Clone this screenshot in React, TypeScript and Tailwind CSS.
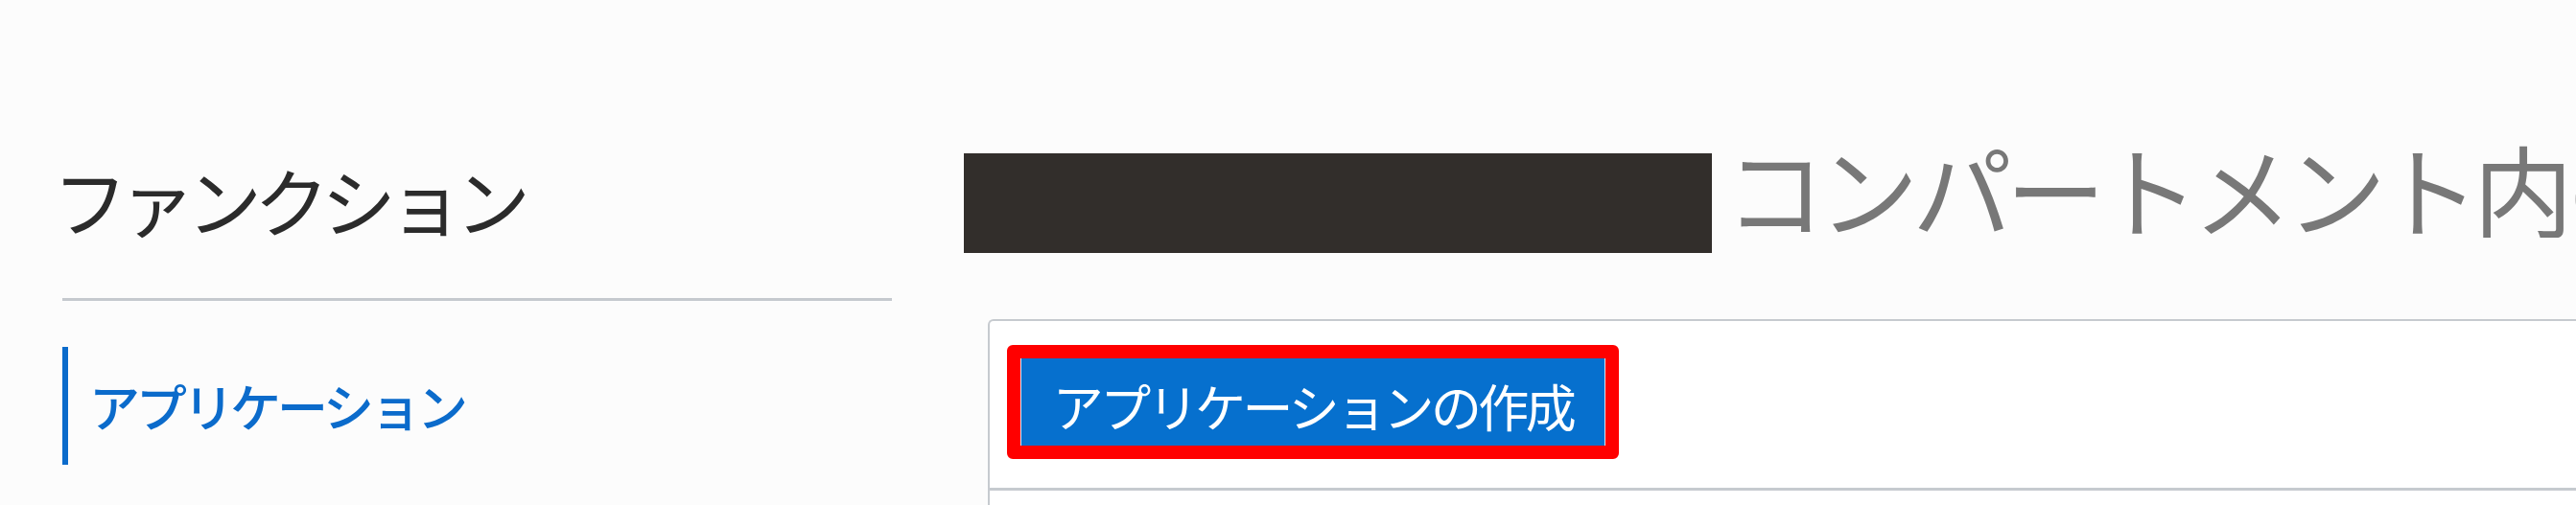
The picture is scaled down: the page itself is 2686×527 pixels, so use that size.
export default function App() {
  return (
    <div className="flex h-[527px] w-full overflow-hidden bg-[#fcfcfc] font-['Noto_Sans_CJK_JP','Noto_Sans',sans-serif]">
      <aside className="ml-[65px] w-[865px] shrink-0 pt-[169px]">
        <h2 className="-ml-[10px] h-[78px] whitespace-nowrap text-[78px] leading-none font-normal tracking-[-8px] text-[#2b2b2b]">
          ファンクション
        </h2>
        <div className="mt-[64px] h-[3px] bg-[#c5c9ce]" />
        <nav className="mt-[48px]">
          <a className="flex h-[123px] items-center border-l-[6px] border-[#0b6bcb] pl-[22px] text-[53px] leading-none font-medium tracking-[-4px] whitespace-nowrap text-[#0b6bcb]">
            アプリケーション
          </a>
        </nav>
      </aside>

      <main className="ml-[75px] min-w-0 flex-1 overflow-hidden pt-[160px]">
        <div className="flex h-[104px] items-center gap-[14px]">
          <div className="h-[104px] w-[780px] shrink-0 bg-[#322e2b]" />
          <div className="mb-[32px] min-w-0 flex-1 overflow-hidden">
            <h1 className="whitespace-nowrap text-[104px] leading-none font-normal tracking-[-6.5px] text-[#787878]">
              コンパートメント内のアプリケーション
            </h1>
          </div>
        </div>

        <section className="ml-[25px] mt-[69px] rounded-tl-[6px] border-l-2 border-t-2 border-[#c6cacf] bg-white">
          <div className="border-b-[3px] border-[#c6cacf] pb-[30px] pl-[18px] pt-[25px]">
            <div className="inline-flex rounded-[6px] border-[14px] border-[#ff0000]">
              <button
                type="button"
                className="flex h-[91px] w-[610px] items-center justify-center border-x border-[#d6e6f5] bg-[#0670ce] pt-[8px] text-[53px] leading-none tracking-[-3.6px] whitespace-nowrap text-white"
              >
                アプリケーションの作成
              </button>
            </div>
          </div>
          <div className="h-[40px]" />
        </section>
      </main>
    </div>
  );
}
